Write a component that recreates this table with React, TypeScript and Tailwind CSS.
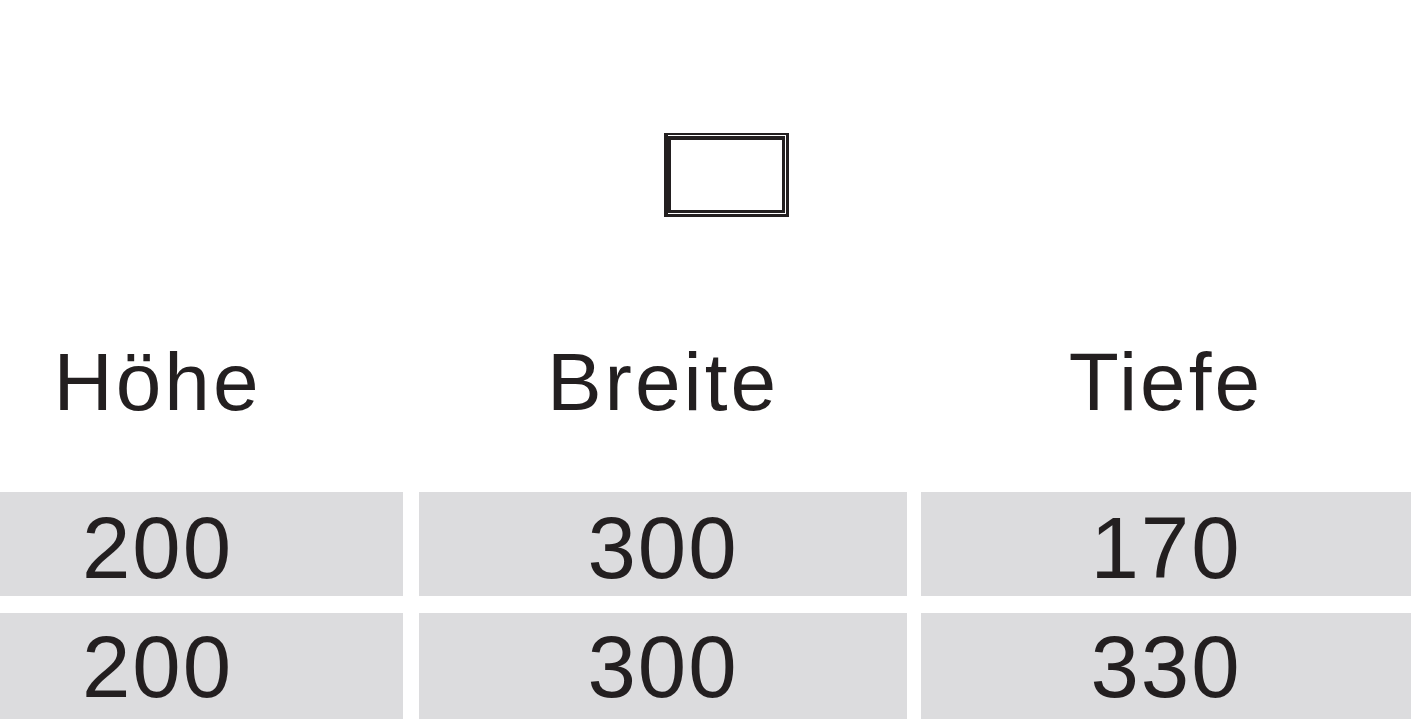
import React from 'react';

const font = { fontFamily: '"Liberation Sans", Arial, sans-serif' };

const rows = [
  ['200', '300', '170'],
  ['200', '300', '330'],
];

// Doppelrahmen-Symbol oben
function FrameIcon() {
  return (
    <svg width="125" height="84" viewBox="0 0 125 84" shapeRendering="crispEdges">
      <rect x="0" y="0" width="125" height="84" fill="#231f20" />
      <rect x="4" y="2" width="118" height="1" fill="#fff" />
      <rect x="121" y="2" width="1" height="79" fill="#fff" />
      <rect x="4" y="80" width="118" height="1" fill="#fff" />
      <rect x="7" y="7" width="111" height="70" fill="#fff" />
    </svg>
  );
}

export default function App() {
  return (
    <div className="w-[1411px] h-[719px] overflow-hidden bg-white text-[#231f20]" style={font}>
      <div className="pt-[133px] pl-[664px]">
        <FrameIcon />
      </div>

      {/* Kopfzeile */}
      <div className="mt-[124px] flex gap-[14px] text-[82px] leading-none tracking-[3px]">
        <div className="w-[405px] pr-[90px] text-center">Höhe</div>
        <div className="w-[488px] text-center">Breite</div>
        <div className="flex-1 text-center">Tiefe</div>
      </div>

      {/* Maße */}
      <div className="mt-[69px] flex flex-col gap-[17px]">
        {rows.map((r, i) => (
          <div key={i} className="flex gap-[14px] text-[87px] leading-none tracking-[2px]">
            <div className={`w-[403px] mr-[2px] pr-[88px] bg-[#dcdcde] text-center ${i === 0 ? 'h-[104px] pt-[12px]' : 'h-[110px] pt-[10px]'}`}>{r[0]}</div>
            <div className={`w-[488px] bg-[#dcdcde] text-center ${i === 0 ? 'h-[104px] pt-[12px]' : 'h-[110px] pt-[10px]'}`}>{r[1]}</div>
            <div className={`flex-1 bg-[#dcdcde] text-center ${i === 0 ? 'h-[104px] pt-[12px]' : 'h-[110px] pt-[10px]'}`}>{r[2]}</div>
          </div>
        ))}
      </div>
    </div>
  );
}
